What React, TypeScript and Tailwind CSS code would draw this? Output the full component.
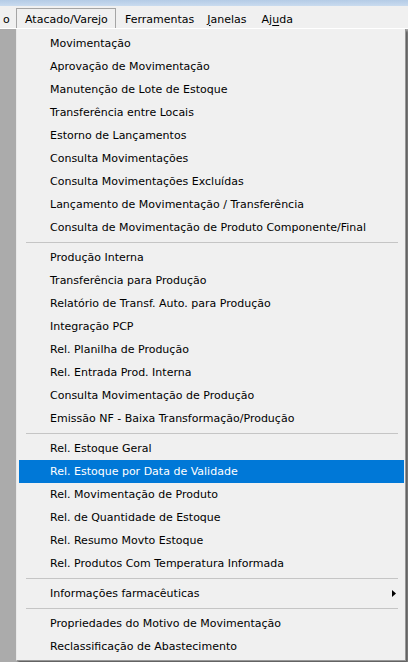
const GROUPS: string[][] = [
  [
    "Movimentação",
    "Aprovação de Movimentação",
    "Manutenção de Lote de Estoque",
    "Transferência entre Locais",
    "Estorno de Lançamentos",
    "Consulta Movimentações",
    "Consulta Movimentações Excluídas",
    "Lançamento de Movimentação / Transferência",
    "Consulta de Movimentação de Produto Componente/Final",
  ],
  [
    "Produção Interna",
    "Transferência para Produção",
    "Relatório de Transf. Auto. para Produção",
    "Integração PCP",
    "Rel. Planilha de Produção",
    "Rel. Entrada Prod. Interna",
    "Consulta Movimentação de Produção",
    "Emissão NF - Baixa Transformação/Produção",
  ],
  [
    "Rel. Estoque Geral",
    "Rel. Estoque por Data de Validade",
    "Rel. Movimentação de Produto",
    "Rel. de Quantidade de Estoque",
    "Rel. Resumo Movto Estoque",
    "Rel. Produtos Com Temperatura Informada",
  ],
  ["Informações farmacêuticas"],
  ["Propriedades do Motivo de Movimentação", "Reclassificação de Abastecimento"],
];

const ACTIVE = "Rel. Estoque por Data de Validade";
const SUBMENU = "Informações farmacêuticas";

function Item({ label }: { label: string }) {
  const active = label === ACTIVE;
  return (
    <div
      className={
        "relative ml-[2px] mr-[1px] flex h-[23px] items-center pl-[31px] " +
        (active ? "bg-[#0078d7] text-white" : "text-black")
      }
    >
      {label}
      {label === SUBMENU && (
        <svg className="absolute right-[8px] top-[8px]" width="4" height="7" viewBox="0 0 4 7">
          <path d="M0 0 L4 3.5 L0 7 Z" fill="#000" />
        </svg>
      )}
    </div>
  );
}

function Separator() {
  return (
    <div className="flex h-[7px] items-center pl-[9px] pr-[7px]">
      <div className="h-px w-full bg-[#c5c5c5]" />
    </div>
  );
}

export default function App() {
  return (
    <div
      className="h-[662px] w-[408px] overflow-hidden bg-[#ababab] text-[11px] leading-none"
      style={{ fontFamily: '"DejaVu Sans", Tahoma, sans-serif' }}
    >
      {/* window title strip */}
      <div className="h-[6px] bg-gradient-to-b from-[#b4cbe6] to-[#c9dbef]" />

      {/* menu bar */}
      <div className="flex h-[23px] items-end border-b border-white bg-[#f0f0f0] text-black">
        <div className="flex h-[20px] w-[16px] items-center pl-[3px] pt-[2px]">o</div>
        <div className="flex h-[20px] w-[100px] items-center border-x border-t border-[#a5a5a5] bg-[#f0f0f0] pl-[8px] pt-[2px]">
          Atacado/Varejo
        </div>
        <div className="flex h-[20px] items-center pl-[9px] pt-[2px]">Ferramentas</div>
        <div className="flex h-[20px] items-center pl-[13px] pt-[2px]">
          <span className="underline underline-offset-2">J</span>anelas
        </div>
        <div className="flex h-[20px] items-center pl-[15px] pt-[2px]">
          Aj<span className="underline underline-offset-2">u</span>da
        </div>
      </div>

      <div className="flex">
        <div className="w-[16px]" />
        <div className="w-[390px] border-b border-l border-r border-[#979797] border-l-[#e8e8e8] bg-[#f0f0f0] pb-[2px] pt-[3px] shadow-[2px_2px_2px_rgba(0,0,0,0.45)]">
          {GROUPS.map((g, gi) => (
            <div key={gi}>
              {gi > 0 && <Separator />}
              {g.map((label) => (
                <Item key={label} label={label} />
              ))}
            </div>
          ))}
        </div>
      </div>
    </div>
  );
}
